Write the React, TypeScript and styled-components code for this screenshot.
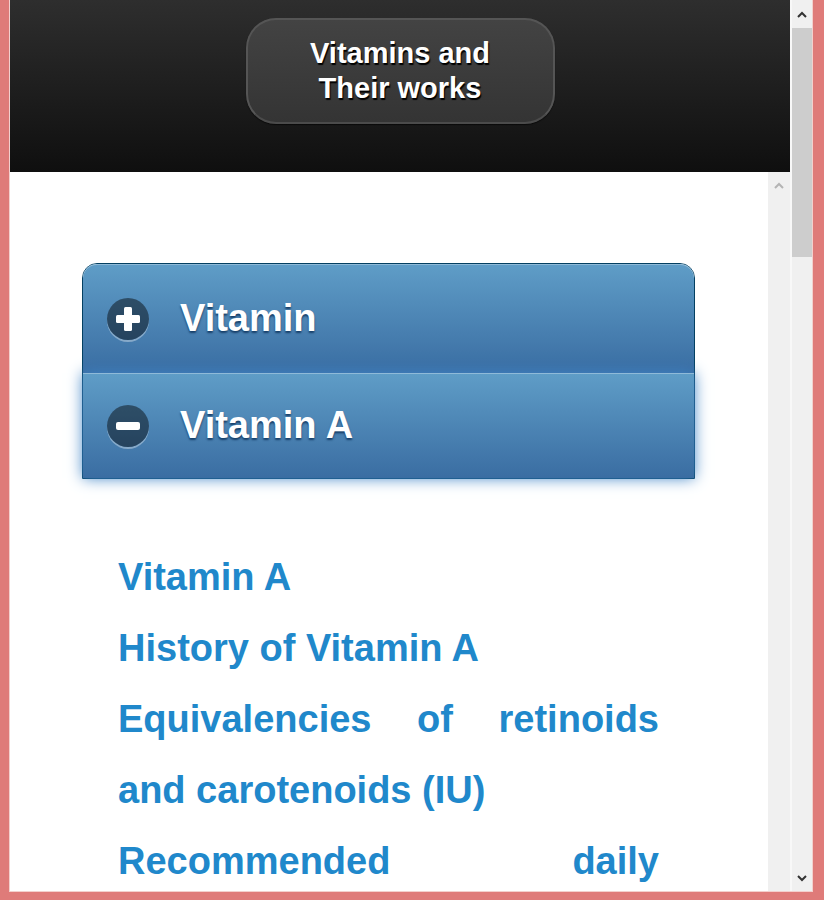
import React from "react";
import styled, { createGlobalStyle } from "styled-components";

const GlobalStyle = createGlobalStyle`
  html, body {
    margin: 0;
    padding: 0;
    overflow: hidden;
    background: #df7b79;
    font-family: "Liberation Sans", Arial, sans-serif;
  }
  * { box-sizing: border-box; }
`;

const Frame = styled.div`
  width: 824px;
  height: 900px;
  background: #df7b79;
  padding: 0 11px 8px 9px;
`;

const Window = styled.div`
  display: flex;
  gap: 2px;
  height: 100%;
  border: 1px solid #f3d0cd;
  border-top: none;
  background: #f8f8f8;
`;

const Page = styled.div`
  width: 780px;
  display: flex;
  flex-direction: column;
  min-height: 0;
`;

const Header = styled.header`
  height: 172px;
  flex-shrink: 0;
  display: flex;
  justify-content: center;
  align-items: flex-start;
  padding-top: 18px;
  background: linear-gradient(#2e2e2e, #0f0f0f);
`;

const TitleButton = styled.div`
  width: 309px;
  height: 106px;
  border-radius: 30px;
  border: 2px solid #555;
  border-bottom-color: #4b4b4b;
  background: linear-gradient(#434343, #343434);
  box-shadow: 0 1px 1px rgba(0, 0, 0, 0.6);
  display: flex;
  flex-direction: column;
  align-items: center;
  justify-content: center;
  color: #fff;
  font-weight: bold;
  font-size: 29px;
  line-height: 35px;
  text-shadow: 1px 2px 1px #000;
`;

const Body = styled.div`
  flex: 1;
  display: flex;
  min-height: 0;
`;

const Content = styled.main`
  flex: 1;
  background: #fff;
  overflow: hidden;
  padding: 91px 73px 0 72px;
`;

const Accordion = styled.div`
  border: 1px solid #044062;
  border-radius: 15px 15px 0 0;
  display: flex;
  flex-direction: column;
`;

const AccordionHeader = styled.div<{ $h: number; $focused?: boolean; $first?: boolean }>`
  position: relative;
  z-index: ${(p) => (p.$focused ? 1 : 0)};
  height: ${(p) => p.$h}px;
  display: flex;
  align-items: center;
  gap: 31px;
  padding-left: 24px;
  background: linear-gradient(#5f9dc7, #3a6da2);
  border-radius: ${(p) => (p.$first ? "14px 14px 0 0" : "0")};
  box-shadow: inset 0 1px 0 rgba(255, 255, 255, 0.3)
    ${(p) => (p.$focused ? ", 0 0 14px #3f84c6" : "")};
  color: #fff;
  font-weight: bold;
  font-size: 38px;
  text-shadow: 0 2px 2px #173f69;
`;

const IconCircle = styled.span`
  width: 42px;
  height: 42px;
  border-radius: 50%;
  background: rgba(0, 0, 0, 0.45);
  box-shadow: 0 2px 0 rgba(255, 255, 255, 0.35);
  display: flex;
  align-items: center;
  justify-content: center;
  flex-shrink: 0;
`;

const LinkList = styled.ul`
  list-style: none;
  margin: 0;
  padding: 63px 36px 0;
`;

const LinkItem = styled.li`
  text-align: justify;
  line-height: 71px;
  font-size: 38px;
  font-weight: bold;
`;

const Link = styled.a`
  color: #2088cb;
  text-decoration: none;
`;

const InnerScroll = styled.div`
  width: 22px;
  background: #f0f0f0;
  display: flex;
  justify-content: center;
  padding-top: 10px;
`;

const OuterScroll = styled.div`
  width: 20px;
  background: #f0f0f0;
  display: flex;
  flex-direction: column;
`;

const ArrowBox = styled.div<{ $h: number }>`
  height: ${(p) => p.$h}px;
  display: flex;
  align-items: center;
  justify-content: center;
  flex-shrink: 0;
`;

const Thumb = styled.div`
  height: 229px;
  background: #cdcdcd;
  flex-shrink: 0;
`;

const TrackFill = styled.div`
  flex: 1;
`;

const Chevron = ({ up, color }: { up?: boolean; color: string }) => (
  <svg width="10" height="7" viewBox="0 0 10 7">
    <path
      d={up ? "M1 6 L5 2 L9 6" : "M1 1 L5 5 L9 1"}
      fill="none"
      stroke={color}
      strokeWidth="2"
    />
  </svg>
);

const PlusIcon = () => (
  <svg width="26" height="26" viewBox="0 0 26 26">
    <rect x="9" y="1" width="8" height="24" rx="1.5" fill="#fff" />
    <rect x="1" y="9" width="24" height="8" rx="1.5" fill="#fff" />
  </svg>
);

const MinusIcon = () => (
  <svg width="26" height="26" viewBox="0 0 26 26">
    <rect x="1" y="9" width="24" height="8" rx="2" fill="#fff" />
  </svg>
);

const links = [
  "Vitamin A",
  "History of Vitamin A",
  "Equivalencies of retinoids and carotenoids (IU)",
  "Recommended daily allowance",
];

export default function App() {
  return (
    <>
      <GlobalStyle />
      <Frame>
        <Window>
          <Page>
            <Header>
              <TitleButton>
                <span>Vitamins and</span>
                <span>Their works</span>
              </TitleButton>
            </Header>
            <Body>
              <Content>
                <Accordion>
                  <AccordionHeader $h={109} $first>
                    <IconCircle>
                      <PlusIcon />
                    </IconCircle>
                    Vitamin
                  </AccordionHeader>
                  <AccordionHeader $h={105} $focused>
                    <IconCircle>
                      <MinusIcon />
                    </IconCircle>
                    Vitamin A
                  </AccordionHeader>
                </Accordion>
                <LinkList>
                  {links.map((l) => (
                    <LinkItem key={l}>
                      <Link href="#">{l}</Link>
                    </LinkItem>
                  ))}
                </LinkList>
              </Content>
              <InnerScroll>
                <Chevron up color="#b4b4b4" />
              </InnerScroll>
            </Body>
          </Page>
          <OuterScroll>
            <ArrowBox $h={28}>
              <Chevron up color="#333" />
            </ArrowBox>
            <Thumb />
            <TrackFill />
            <ArrowBox $h={26}>
              <Chevron color="#333" />
            </ArrowBox>
          </OuterScroll>
        </Window>
      </Frame>
    </>
  );
}
